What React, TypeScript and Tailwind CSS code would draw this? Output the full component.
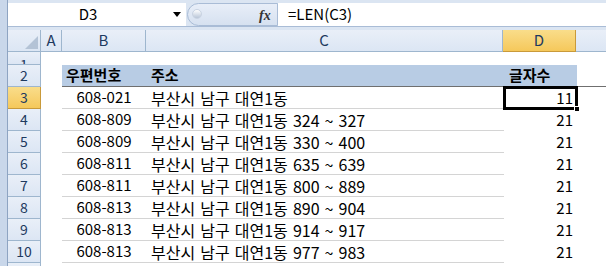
import React from "react";

const rows = [
  { n: 3, code: "608-021", addr: "부산시 남구 대연1동", len: 11 },
  { n: 4, code: "608-809", addr: "부산시 남구 대연1동 324 ~ 327", len: 21 },
  { n: 5, code: "608-809", addr: "부산시 남구 대연1동 330 ~ 400", len: 21 },
  { n: 6, code: "608-811", addr: "부산시 남구 대연1동 635 ~ 639", len: 21 },
  { n: 7, code: "608-811", addr: "부산시 남구 대연1동 800 ~ 889", len: 21 },
  { n: 8, code: "608-813", addr: "부산시 남구 대연1동 890 ~ 904", len: 21 },
  { n: 9, code: "608-813", addr: "부산시 남구 대연1동 914 ~ 917", len: 21 },
  { n: 10, code: "608-813", addr: "부산시 남구 대연1동 977 ~ 983", len: 21 },
];

const font = { fontFamily: '"Noto Sans CJK KR", "Noto Sans", sans-serif' };

function Strip() {
  return <div className="w-[8px] shrink-0 self-stretch bg-[#c9d7ea] border-r border-[#8ea4c2]" />;
}

function RowHead({ n, active, h }: { n: number | string; active?: boolean; h: string }) {
  return (
    <div
      className={`w-[33px] shrink-0 ${h} flex items-center justify-center border-r border-b overflow-hidden text-[14px] ${
        active
          ? "bg-gradient-to-b from-[#f9dd8a] to-[#f5c85a] border-[#c99a3a] text-[#1e3a5f]"
          : "bg-gradient-to-b from-[#e9eff8] to-[#dce6f4] border-[#9eb6ce] text-[#1e3a5f]"
      }`}
    >
      {n}
    </div>
  );
}

export default function App() {
  return (
    <div className="w-[606px] h-[266px] overflow-hidden bg-white text-black" style={font}>
      {/* formula bar */}
      <div className="flex h-[30px] bg-[#dbe5f2]">
        <Strip />
        <div className="flex-1 flex flex-col">
          <div className="h-[3px] bg-[#dbe5f2]" />
          <div className="h-[24px] flex border-b border-[#a9bcd6]">
            <div className="w-[178px] bg-white flex items-center relative">
              <span className="w-full text-center text-[15px] pr-[18px]">D3</span>
              <span className="absolute left-[165px] top-[9px] w-0 h-0 border-l-[4px] border-r-[4px] border-t-[5px] border-l-transparent border-r-transparent border-t-black" />
            </div>
            <div className="w-[92px] flex items-center relative bg-[#dbe5f2]">
              <div className="absolute left-[1px] top-[0px] h-[23px] w-[91px] rounded-l-[12px] border border-[#a9bcd6] bg-gradient-to-b from-[#e8eef8] to-[#d6e1f0]" />
              <div className="absolute left-[6px] top-[6px] w-[10px] h-[10px] rounded-full bg-gradient-to-b from-[#ffffff] to-[#b9c6d8] border border-[#c9d3e2]" />
              <span className="absolute left-[73px] top-[2px] text-[14px] italic font-bold text-[#333]" style={{ fontFamily: '"Liberation Serif", serif' }}>
                fx
              </span>
            </div>
            <div className="flex-1 bg-white flex items-center pl-[10px] text-[15px]">=LEN(C3)</div>
          </div>
          <div className="flex-1 bg-[#dbe5f2]" />
        </div>
      </div>

      {/* column headers */}
      <div className="flex h-[22px]">
        <Strip />
        <div className="w-[33px] shrink-0 relative border-r border-b border-[#9eb6ce] bg-gradient-to-b from-[#e9eff8] to-[#dce6f4]">
          <svg className="absolute right-[2px] bottom-[2px]" width="13" height="13" viewBox="0 0 13 13">
            <polygon points="13,0 13,13 0,13" fill="#b4c3d6" />
          </svg>
        </div>
        {[
          { l: "A", w: "w-[21px]" },
          { l: "B", w: "w-[84px]" },
          { l: "C", w: "w-[357px]" },
        ].map((c) => (
          <div
            key={c.l}
            className={`${c.w} shrink-0 flex items-center justify-center border-r border-b border-[#9eb6ce] bg-gradient-to-b from-[#e9eff8] to-[#dce6f4] text-[15px] text-[#1e3a5f]`}
          >
            {c.l}
          </div>
        ))}
        <div className="w-[73px] shrink-0 flex items-center justify-center border-r border-b border-[#c99a3a] bg-gradient-to-b from-[#f9dd8a] to-[#f5c85a] text-[15px] text-[#1e3a5f]">
          D
        </div>
        <div className="flex-1 border-b border-[#9eb6ce] bg-gradient-to-b from-[#e9eff8] to-[#dce6f4]" />
      </div>

      {/* row 1 */}
      <div className="flex h-[13px]">
        <Strip />
        <div className="w-[33px] shrink-0 h-[13px] flex items-end justify-center border-r border-b border-[#9eb6ce] bg-gradient-to-b from-[#e9eff8] to-[#dce6f4] overflow-hidden text-[14px] text-[#1e3a5f]">
          <span className="leading-[13px] translate-y-[7px]">1</span>
        </div>
        <div className="flex-1" />
      </div>

      {/* row 2 header */}
      <div className="flex h-[22px]">
        <Strip />
        <RowHead n={2} h="h-[22px]" />
        <div className="w-[21px] shrink-0" />
        <div className="flex flex-1 border-b border-[#6f6f6f]">
          <div className="w-[442px] shrink-0 flex bg-[#b8cce4] font-bold text-[15px] items-center">
            <div className="w-[84px] pl-[4px]">우편번호</div>
            <div className="pl-[5px]">주소</div>
          </div>
          <div className="w-[73px] shrink-0 bg-[#b8cce4] font-bold text-[15px] flex items-center pl-[5px]">글자수</div>
          <div className="flex-1" />
        </div>
      </div>

      {rows.map((r) => (
        <div key={r.n} className="flex h-[22px]">
          <Strip />
          <RowHead n={r.n} active={r.n === 3} h="h-[22px]" />
          <div className="w-[21px] shrink-0" />
          <div className="w-[442px] shrink-0 flex border-b border-[#d4d4d4] items-center">
            <div className="w-[84px] text-center text-[15px]">{r.code}</div>
            <div className="pl-[5px] whitespace-pre text-[16px] [word-spacing:1.5px]">{r.addr}</div>
          </div>
          <div className="w-[73px] shrink-0 relative text-[15px] flex items-center justify-end pr-[4px]">
            {r.n === 3 && (
              <>
                <div className="absolute left-[-1px] top-[-1px] w-[75px] h-[24px] border-[3px] border-black" />
                <div className="absolute right-[-3px] bottom-[-3px] w-[6px] h-[6px] bg-black border border-white" />
              </>
            )}
            <span className="relative">{r.len}</span>
          </div>
          <div className="flex-1" />
        </div>
      ))}

      <div className="flex h-[22px]">
        <Strip />
        <RowHead n="" h="h-[22px]" />
      </div>
    </div>
  );
}
